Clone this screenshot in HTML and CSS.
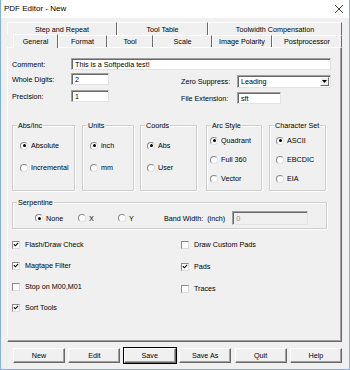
FILE: index.html
```html
<!DOCTYPE html>
<html>
<head>
<meta charset="utf-8">
<link rel="stylesheet" href="styles.css">
</head>
<body>
<div class="window">
  <div class="titlebar">
    <span class="title">PDF Editor - New</span>
    <svg class="close" width="10" height="10" viewBox="0 0 10 10"><path d="M1 1 L9 9 M9 1 L1 9" stroke="#333" stroke-width="0.9" fill="none"/></svg>
  </div>
  <div class="client">
    <div class="tabrow back">
      <div class="tab t-step">Step and Repeat</div>
      <div class="tab t-tooltable">Tool Table</div>
      <div class="tab t-toolwidth">Toolwidth Compensation</div>
    </div>
    <div class="tabrow front">
      <div class="tab sel t-general">General</div>
      <div class="tab t-format">Format</div>
      <div class="tab t-tool">Tool</div>
      <div class="tab t-scale">Scale</div>
      <div class="tab t-image">Image Polarity</div>
      <div class="tab t-post">Postprocessor</div>
    </div>
    <div class="panel">
      <div class="row comment">
        <span class="lbl lbl-left">Comment:</span>
        <div class="field f-comment">This is a Softpedia test!</div>
      </div>
      <div class="pair">
        <div class="col col-left">
          <div class="row">
            <span class="lbl lbl-left">Whole Digits:</span>
            <div class="field f-short">2</div>
          </div>
          <div class="row">
            <span class="lbl lbl-left">Precision:</span>
            <div class="field f-short">1</div>
          </div>
        </div>
        <div class="col col-right">
          <div class="row r-select">
            <span class="lbl lbl-right">Zero Suppress:</span>
            <div class="field select">
              <span class="sel-text">Leading</span>
              <span class="drop"><svg width="5" height="3" viewBox="0 0 5 3"><path d="M0 0 H5 L2.5 3 Z" fill="#000"/></svg></span>
            </div>
          </div>
          <div class="row">
            <span class="lbl lbl-right">File Extension:</span>
            <div class="field f-ext">sft</div>
          </div>
        </div>
      </div>

      <div class="groups">
        <div class="group g-abs two">
          <span class="legend">Abs/Inc</span>
          <div class="items">
            <div class="opt"><span class="radio on"></span>Absolute</div>
            <div class="opt"><span class="radio"></span>Incremental</div>
          </div>
        </div>
        <div class="group g-units two">
          <span class="legend">Units</span>
          <div class="items">
            <div class="opt"><span class="radio on"></span>inch</div>
            <div class="opt"><span class="radio"></span>mm</div>
          </div>
        </div>
        <div class="group g-coords two">
          <span class="legend">Coords</span>
          <div class="items">
            <div class="opt"><span class="radio on"></span>Abs</div>
            <div class="opt"><span class="radio"></span>User</div>
          </div>
        </div>
        <div class="group g-arc three">
          <span class="legend">Arc Style</span>
          <div class="items">
            <div class="opt"><span class="radio on"></span>Quadrant</div>
            <div class="opt"><span class="radio"></span>Full 360</div>
            <div class="opt"><span class="radio"></span>Vector</div>
          </div>
        </div>
        <div class="group g-char three">
          <span class="legend">Character Set</span>
          <div class="items">
            <div class="opt"><span class="radio on"></span>ASCII</div>
            <div class="opt"><span class="radio"></span>EBCDIC</div>
            <div class="opt"><span class="radio"></span>EIA</div>
          </div>
        </div>
      </div>

      <div class="group serp">
        <span class="legend">Serpentine</span>
        <div class="serp-row">
          <div class="opt o-none"><span class="radio on"></span>None</div>
          <div class="opt o-x"><span class="radio"></span>X</div>
          <div class="opt o-y"><span class="radio"></span>Y</div>
          <span class="bw">Band Width:</span>
          <span class="inch">(inch)</span>
          <div class="field f-band disabled">0</div>
        </div>
      </div>

      <div class="checks">
        <div class="ccol ccol-left">
          <div class="chk"><span class="box on"><svg width="7" height="7" viewBox="0 0 7 7"><path d="M1 3.2 L2.8 5 L6 1.6" stroke="#000" stroke-width="1.3" fill="none"/></svg></span>Flash/Draw Check</div>
          <div class="chk"><span class="box on"><svg width="7" height="7" viewBox="0 0 7 7"><path d="M1 3.2 L2.8 5 L6 1.6" stroke="#000" stroke-width="1.3" fill="none"/></svg></span>Magtape Filter</div>
          <div class="chk"><span class="box"></span>Stop on M00,M01</div>
          <div class="chk"><span class="box on"><svg width="7" height="7" viewBox="0 0 7 7"><path d="M1 3.2 L2.8 5 L6 1.6" stroke="#000" stroke-width="1.3" fill="none"/></svg></span>Sort Tools</div>
        </div>
        <div class="ccol ccol-right">
          <div class="chk"><span class="box"></span>Draw Custom Pads</div>
          <div class="chk"><span class="box on"><svg width="7" height="7" viewBox="0 0 7 7"><path d="M1 3.2 L2.8 5 L6 1.6" stroke="#000" stroke-width="1.3" fill="none"/></svg></span>Pads</div>
          <div class="chk"><span class="box"></span>Traces</div>
        </div>
      </div>
    </div>

    <div class="buttons">
      <div class="btn">New</div>
      <div class="btn">Edit</div>
      <div class="btn default">Save</div>
      <div class="btn">Save As</div>
      <div class="btn">Quit</div>
      <div class="btn">Help</div>
    </div>
  </div>
</div>
</body>
</html>
```

FILE: styles.css
```css
* { box-sizing: border-box; }
html, body { margin: 0; padding: 0; }
body {
  width: 350px;
  height: 370px;
  overflow: hidden;
  font-family: "Liberation Sans", Arial, sans-serif;
  font-size: 7.2px;
  color: #000;
  background: #f0f0f0;
}
.window {
  width: 350px;
  height: 370px;
  border: 1px solid #7db4ea;
  border-top: none;
  background: #f0f0f0;
  display: flex;
  flex-direction: column;
}
.titlebar {
  height: 18px;
  background: #fff;
  display: flex;
  align-items: center;
  justify-content: space-between;
  padding: 0 5px 0 3px;
  flex: none;
}
.title { font-size: 8px; line-height: 10px; color: #000; }
.close { display: block; }

.client {
  flex: 1;
  padding: 4px 7px 0 6px;
  display: flex;
  flex-direction: column;
}

/* tabs */
.tabrow { display: flex; flex: none; }
.tabrow.back { height: 13px; }
.tabrow.front { height: 12px; padding-left: 6px; position: relative; z-index: 1; }
.tab {
  display: flex;
  align-items: center;
  justify-content: center;
  border-top: 1px solid #fff;
  border-left: 1px solid #fff;
  border-right: 1px solid #696969;
  line-height: 9px;
  white-space: nowrap;
  background: #f0f0f0;
}
.t-step { width: 110px; }
.t-tooltable { width: 91px; }
.t-toolwidth { width: 134px; }
.t-general { width: 45px; }
.t-format { width: 49px; }
.t-tool { width: 46px; }
.t-scale { width: 59px; }
.t-image { width: 60px; }
.t-post { width: 70px; }
.tab.sel { height: 14px; margin-top: -1px; padding-bottom: 1px; }

.panel {
  height: 295px;
  flex: none;
  border-top: 1px solid #fff;
  border-left: 1px solid #fff;
  border-right: 1px solid #696969;
  border-bottom: 1px solid #696969;
  box-shadow: inset -1px -1px 0 #a0a0a0;
  padding: 10px 0 0 4px;
  display: flex;
  flex-direction: column;
}

.row { display: flex; align-items: center; height: 12px; }
.lbl { white-space: nowrap; }
.lbl-left { width: 59px; flex: none; }
.lbl-right { width: 56px; flex: none; }

.field {
  height: 12px;
  background: #fff;
  border: 1px solid;
  border-color: #a0a0a0 #e3e3e3 #e3e3e3 #a0a0a0;
  box-shadow: inset 1px 1px 0 #696969;
  padding: 0 2px 0 3px;
  display: flex;
  align-items: center;
  white-space: nowrap;
  line-height: 9px;
}
.f-comment { width: 260px; }
.f-short { width: 38px; }
.f-ext { width: 44px; }

.pair { display: flex; }
.col-left { width: 169px; margin-top: 3px; display: flex; flex-direction: column; gap: 5px; }
.col-right { margin-top: 5px; display: flex; flex-direction: column; gap: 4px; }
.r-select { height: 13px; }
.select { width: 94px; height: 13px; padding-right: 1px; justify-content: space-between; }
.drop {
  width: 9px;
  height: 9px;
  background: #f0f0f0;
  border: 1px solid;
  border-color: #fff #696969 #696969 #fff;
  display: flex;
  align-items: center;
  justify-content: center;
}
.drop svg { display: block; }

/* group boxes */
.groups { display: flex; margin-top: 21px; }
.group {
  border: 1px solid #cdcdcd;
  box-shadow: 1px 1px 0 #fff, inset 1px 1px 0 #fff;
  display: flex;
  flex-direction: column;
  height: 66px;
}
.legend {
  align-self: flex-start;
  margin: -5px 0 0 4px;
  padding: 0 1px;
  background: #f0f0f0;
  line-height: 9px;
  white-space: nowrap;
}
.items { display: flex; flex-direction: column; }
.two .items { padding-top: 11px; gap: 13px; }
.three .items { padding-top: 6px; gap: 10px; }
.g-abs { width: 63px; }
.g-abs .items { padding-left: 7px; }
.g-units { width: 52px; margin-left: 7px; }
.g-units .items { padding-left: 7px; }
.g-coords { width: 57px; margin-left: 6px; }
.g-coords .items { padding-left: 6px; }
.g-arc { width: 56px; margin-left: 9px; }
.g-arc .items { padding-left: 3px; }
.g-char { width: 57px; margin-left: 7px; }
.g-char .items { padding-left: 6px; }

.opt { display: flex; align-items: center; height: 9px; line-height: 9px; white-space: nowrap; }
.radio {
  width: 8px;
  height: 8px;
  border-radius: 50%;
  background: #fff;
  border: 1px solid;
  border-color: #8a8a8a #e0e0e0 #e0e0e0 #8a8a8a;
  margin-right: 3px;
  flex: none;
  display: flex;
  align-items: center;
  justify-content: center;
}
.radio.on::after {
  content: "";
  width: 3px;
  height: 3px;
  border-radius: 50%;
  background: #000;
}

.serp { width: 315px; height: 27px; margin-top: 11px; }
.serp-row { display: flex; align-items: center; margin-top: 4px; height: 14px; }
.o-none { margin-left: 22px; width: 43px; }
.o-x { width: 40px; }
.o-y { width: 46px; }
.inch { margin-left: 4px; }
.f-band { width: 76px; height: 14px; margin-left: 7px; }
.field.disabled { background: #f0f0f0; color: #8a8a8a; }

/* checkboxes */
.checks { display: flex; margin-top: 11px; }
.ccol { display: flex; flex-direction: column; }
.ccol-left { width: 169px; gap: 12px; }
.ccol-right { gap: 13px; }
.chk { display: flex; align-items: center; height: 9px; line-height: 9px; white-space: nowrap; }
.box {
  width: 8px;
  height: 8px;
  background: #fff;
  border: 1px solid;
  border-color: #8a8a8a #dcdcdc #dcdcdc #8a8a8a;
  margin-right: 5px;
  flex: none;
  display: flex;
  align-items: center;
  justify-content: center;
}
.box svg { display: block; }

/* buttons */
.buttons {
  display: flex;
  justify-content: space-between;
  padding: 0 0 0 6px;
  margin-top: 6px;
}
.btn {
  width: 52px;
  height: 15px;
  display: flex;
  align-items: center;
  justify-content: center;
  background: #f0f0f0;
  border: 1px solid;
  border-color: #fff #696969 #696969 #fff;
  box-shadow: inset -1px -1px 0 #a0a0a0;
  line-height: 9px;
}
.btn.default { outline: 1px solid #000; outline-offset: 0; border-color: #fff #696969 #696969 #fff; }
```
